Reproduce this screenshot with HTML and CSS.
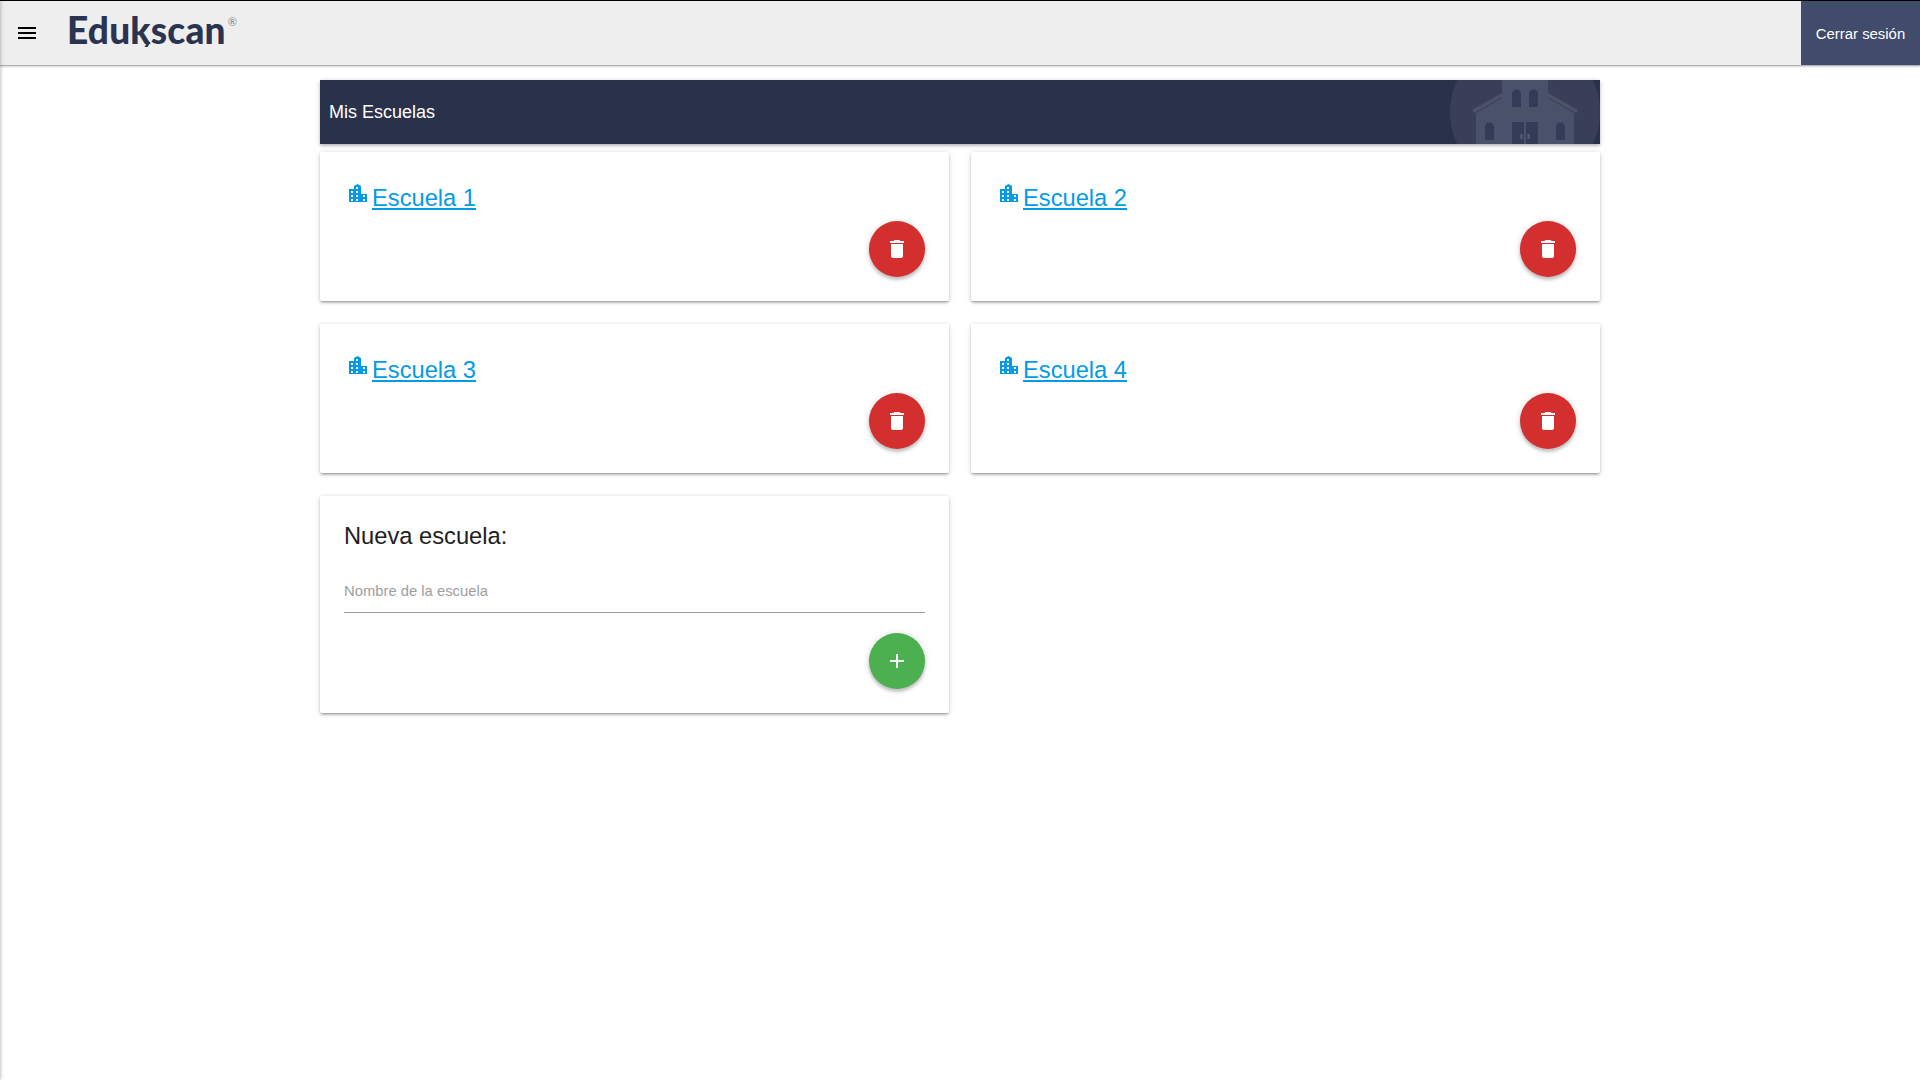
FILE: index.html
```html
<!DOCTYPE html>
<html lang="es">
<head>
<meta charset="utf-8">
<title>Edukscan</title>
<link rel="stylesheet" href="styles.css">
</head>
<body>
<div class="side-edge"></div>
<nav class="topbar">
  <div class="brand">
    <button class="menu-btn" aria-label="menu">
      <svg width="24" height="24" viewBox="0 0 24 24"><path d="M3 18h18v-2H3v2zm0-5h18v-2H3v2zm0-7v2h18V6H3z"/></svg>
    </button>
    <span class="logo">Edukscan<sup class="reg">®</sup></span>
  </div>
  <a class="logout">Cerrar sesión</a>
</nav>
<main class="container">
  <header class="page-head">
    <h1>Mis Escuelas</h1>
    <svg class="head-art" width="150" height="64" viewBox="0 0 150 64">
      <circle cx="75" cy="32" r="75" fill="#fff" fill-opacity=".07"/>
      <g fill="#fff" fill-opacity=".1">
        <path d="M22 30 52 13V17L24 33Z"/>
        <path d="M128 30 98 13V17L126 33Z"/>
      </g>
      <path fill="#4a516a" d="M52 0H98V18L124 33V64H26V33L52 18Z"/>
      <g fill="#343b57">
        <path d="M62 27V14a4.500 4.500 0 0 1 9 0V27Z"/>
        <path d="M79 27V14a4.500 4.500 0 0 1 9 0V27Z"/>
        <path d="M35 60V47a4.500 4.500 0 0 1 9 0V60Z"/>
        <path d="M106 60V47a4.500 4.500 0 0 1 9 0V60Z"/>
        <path d="M62 42H74V64H62Z"/>
        <path d="M76 42H88V64H76Z"/>
      </g>
      <g fill="#5a6078">
        <rect x="70.500" y="54" width="2" height="5"/>
        <rect x="77.500" y="54" width="2" height="5"/>
      </g>
    </svg>
  </header>
  <section class="grid">
    <article class="card school">
      <a class="school-link"><svg class="bld" width="24" height="24" viewBox="0 0 24 24"><path fill-rule="evenodd" d="M5 9H10V6L13.500 4L17 6V14H23V22H5ZM7 11v2h2v-2zM7 15v2h2v-2zM7 19v2h2v-2zM12 7v2h2V7zM12 11v2h2v-2zM12 15v2h2v-2zM12 19v2h2v-2zM19 15v2h2v-2zM19 19v2h2v-2z"/></svg><span>Escuela 1</span></a>
      <button class="fab red" aria-label="borrar"><svg width="24" height="24" viewBox="0 0 24 24"><path d="M6 19c0 1.100.9 2 2 2h8c1.100 0 2-.9 2-2V7H6v12zM19 4h-3.500l-1-1h-5l-1 1H5v2h14V4z"/></svg></button>
    </article>
    <article class="card school">
      <a class="school-link"><svg class="bld" width="24" height="24" viewBox="0 0 24 24"><path fill-rule="evenodd" d="M5 9H10V6L13.500 4L17 6V14H23V22H5ZM7 11v2h2v-2zM7 15v2h2v-2zM7 19v2h2v-2zM12 7v2h2V7zM12 11v2h2v-2zM12 15v2h2v-2zM12 19v2h2v-2zM19 15v2h2v-2zM19 19v2h2v-2z"/></svg><span>Escuela 2</span></a>
      <button class="fab red" aria-label="borrar"><svg width="24" height="24" viewBox="0 0 24 24"><path d="M6 19c0 1.100.9 2 2 2h8c1.100 0 2-.9 2-2V7H6v12zM19 4h-3.500l-1-1h-5l-1 1H5v2h14V4z"/></svg></button>
    </article>
    <article class="card school">
      <a class="school-link"><svg class="bld" width="24" height="24" viewBox="0 0 24 24"><path fill-rule="evenodd" d="M5 9H10V6L13.500 4L17 6V14H23V22H5ZM7 11v2h2v-2zM7 15v2h2v-2zM7 19v2h2v-2zM12 7v2h2V7zM12 11v2h2v-2zM12 15v2h2v-2zM12 19v2h2v-2zM19 15v2h2v-2zM19 19v2h2v-2z"/></svg><span>Escuela 3</span></a>
      <button class="fab red" aria-label="borrar"><svg width="24" height="24" viewBox="0 0 24 24"><path d="M6 19c0 1.100.9 2 2 2h8c1.100 0 2-.9 2-2V7H6v12zM19 4h-3.500l-1-1h-5l-1 1H5v2h14V4z"/></svg></button>
    </article>
    <article class="card school">
      <a class="school-link"><svg class="bld" width="24" height="24" viewBox="0 0 24 24"><path fill-rule="evenodd" d="M5 9H10V6L13.500 4L17 6V14H23V22H5ZM7 11v2h2v-2zM7 15v2h2v-2zM7 19v2h2v-2zM12 7v2h2V7zM12 11v2h2v-2zM12 15v2h2v-2zM12 19v2h2v-2zM19 15v2h2v-2zM19 19v2h2v-2z"/></svg><span>Escuela 4</span></a>
      <button class="fab red" aria-label="borrar"><svg width="24" height="24" viewBox="0 0 24 24"><path d="M6 19c0 1.100.9 2 2 2h8c1.100 0 2-.9 2-2V7H6v12zM19 4h-3.500l-1-1h-5l-1 1H5v2h14V4z"/></svg></button>
    </article>
    <article class="card new-school">
      <h2>Nueva escuela:</h2>
      <input class="name-input" type="text" placeholder="Nombre de la escuela">
      <button class="fab green" aria-label="añadir"><svg width="24" height="24" viewBox="0 0 24 24"><path d="M19 13h-6v6h-2v-6H5v-2h6V5h2v6h6v2z"/></svg></button>
    </article>
  </section>
</main>
</body>
</html>
```
FILE: styles.css
```css
* { box-sizing: border-box; }
html, body { height: 100%; }
body {
  margin: 0;
  background: #fff;
  color: #212121;
  font-family: "Liberation Sans", Arial, sans-serif;
  overflow: hidden;
}
.side-edge {
  position: fixed;
  top: 0;
  left: -300px;
  width: 300px;
  height: 100%;
  box-shadow: 0 0 4px rgba(0,0,0,.35);
  z-index: 5;
}
.topbar {
  height: 65px;
  background: #eee;
  border-top: 1px solid #000;
  display: flex;
  justify-content: space-between;
  box-shadow: 0 2px 2px rgba(0,0,0,.14), 0 1px 1px rgba(0,0,0,.2);
}
.brand { display: flex; align-items: flex-start; }
.menu-btn {
  border: 0;
  padding: 0;
  background: none;
  margin: 20px 0 0 15px;
  width: 24px;
  height: 24px;
}
.menu-btn svg { display: block; }
.logo {
  position: relative;
  margin: 6px 0 0 28px;
  font-family: "Lato", sans-serif;
  font-weight: 900;
  font-size: 37px;
  line-height: 46px;
  letter-spacing: .2px;
  color: #2a3350;
  display: flex;
  align-items: flex-start;
}
.logo::after {
  content: "";
  position: absolute;
  left: 79px;
  top: 35px;
  width: 3px;
  height: 5px;
  background: #2a3350;
  transform: skewX(-30deg);
}
.reg {
  font-size: 11px;
  line-height: 12px;
  font-weight: 400;
  letter-spacing: 0;
  color: #7d8290;
  margin: 9px 0 0 2px;
}
.logout {
  width: 119px;
  padding-top: 1px;
  background: #414b6b;
  color: #fff;
  font-size: 14.9px;
  display: flex;
  align-items: center;
  justify-content: center;
}
.container {
  width: 1280px;
  margin: 15px auto 0;
}
.page-head {
  position: relative;
  height: 64px;
  background: #2a314b;
  overflow: hidden;
  display: flex;
  align-items: center;
  padding-left: 9px;
  box-shadow: 0 2px 2px rgba(0,0,0,.14), 0 1px 5px rgba(0,0,0,.2);
}
.page-head h1 {
  margin: 0;
  font-size: 18px;
  font-weight: 400;
  color: #fff;
}
.head-art {
  position: absolute;
  right: 0;
  top: 0;
}
.grid {
  display: grid;
  grid-template-columns: 629px 629px;
  column-gap: 22px;
  row-gap: 23px;
  margin-top: 8px;
  align-items: start;
}
.card {
  background: #fff;
  border-radius: 2px;
  box-shadow: 0 2px 2px rgba(0,0,0,.14), 0 3px 1px -2px rgba(0,0,0,.12), 0 1px 5px rgba(0,0,0,.2);
  display: flex;
  flex-direction: column;
}
.school { height: 149px; padding: 24px; }
.school-link {
  display: flex;
  align-items: flex-start;
  color: #039be5;
  font-size: 23.7px;
  line-height: 28px;
  margin-top: 8px;
}
.school-link span {
  text-decoration: underline;
  margin-left: 4px;
}
.bld { fill: #039be5; flex: none; margin-top: -4px; }
.fab {
  width: 56px;
  height: 56px;
  border: 0;
  padding: 0;
  border-radius: 50%;
  display: flex;
  align-items: center;
  justify-content: center;
  align-self: flex-end;
  box-shadow: 0 3px 3px rgba(0,0,0,.16), 0 1px 6px rgba(0,0,0,.18);
}
.fab svg { fill: #fff; display: block; }
.school .fab { margin-top: 9px; }
.red { background: #d32f2f; }
.green { background: #4caf50; }
.new-school { height: 217px; padding: 24px; }
.new-school h2 {
  margin: 0;
  font-size: 23.7px;
  line-height: 32px;
  font-weight: 400;
}
.name-input {
  display: block;
  margin-top: 20px;
  width: 100%;
  height: 41px;
  border: 0;
  border-bottom: 1px solid #9e9e9e;
  padding: 0 0 3px;
  outline: 0;
  background: transparent;
  font: 14.8px "Liberation Sans", Arial, sans-serif;
}
.name-input::placeholder { color: #9e9e9e; opacity: 1; }
.new-school .fab { margin-top: 20px; }
```
